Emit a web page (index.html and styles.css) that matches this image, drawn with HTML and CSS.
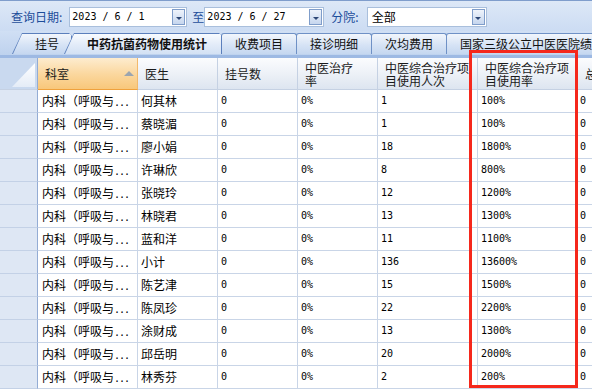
FILE: index.html
```html
<!DOCTYPE html>
<html lang="zh-CN">
<head>
    <meta charset="UTF-8">
    <title>中药抗菌药物使用统计</title>
    <link rel="stylesheet" href="styles.css">
</head>
<body>
<div class="app">

    <div class="toolbar">
        <span class="lbl">查询日期:</span>
        <div class="combo date1"><span class="val n">2023 / 6 / 1</span><span class="btn"></span></div>
        <span class="lbl to">至</span>
        <div class="combo date2"><span class="val n">2023 / 6 / 27</span><span class="btn"></span></div>
        <span class="lbl branch">分院:</span>
        <div class="combo sel"><span class="val">全部</span><span class="btn"></span></div>
    </div>

    <div class="tabbar">
        <div class="tab slant first"><div class="tab-in">挂号</div></div>
        <div class="tab slant active"><div class="tab-in">中药抗菌药物使用统计</div></div>
        <div class="tab">收费项目</div>
        <div class="tab">接诊明细</div>
        <div class="tab">次均费用</div>
        <div class="tab">国家三级公立中医医院绩效考核</div>
    </div>

    <div class="grid">
        <div class="row head">
            <div class="cell corner">
                <svg width="37" height="31" viewBox="0 0 37 31">
                    <defs>
                        <linearGradient id="cg" x1="0" y1="0" x2="0" y2="1">
                            <stop offset="0" stop-color="#ffffff"/>
                            <stop offset="1" stop-color="#e4ecf7"/>
                        </linearGradient>
                    </defs>
                    <polygon points="12,29 35,29 35,5" fill="url(#cg)"/>
                </svg>
            </div>
            <div class="cell sorted">科室<span class="sort-arrow"></span></div>
            <div class="cell">医生</div>
            <div class="cell">挂号数</div>
            <div class="cell">中医治疗<br>率</div>
            <div class="cell">中医综合治疗项<br>目使用人次</div>
            <div class="cell">中医综合治疗项<br>目使用率</div>
            <div class="cell">总人次</div>
        </div>
        <div id="rows"></div>
    </div>

    <div class="mark"></div>
</div>

<script>
    const rows = [
        ["何其林", 1], ["蔡晓湄", 1], ["廖小娟", 18], ["许琳欣", 8],
        ["张晓玲", 12], ["林晓君", 13], ["蓝和洋", 11], ["小计", 136],
        ["陈艺津", 15], ["陈凤珍", 22], ["涂财成", 13], ["邱岳明", 20],
        ["林秀芬", 2]
    ];

    document.getElementById("rows").innerHTML = rows.map(r => `
        <div class="row">
            <div class="cell rh"></div>
            <div class="cell">内科（呼吸与<span class="n dots">...</span></div>
            <div class="cell">${r[0]}</div>
            <div class="cell n">0</div>
            <div class="cell n">0%</div>
            <div class="cell n">${r[1]}</div>
            <div class="cell n">${r[1] * 100}%</div>
            <div class="cell n last">0</div>
        </div>
    `).join("");
</script>
</body>
</html>
```

FILE: styles.css
```css
body {
    margin: 0;
    font-family: "Noto Sans CJK SC", sans-serif;
    font-size: 12px;
    color: #000;
    background: #fff;
    overflow: hidden;
}
.app {
    position: relative;
    width: 592px;
    height: 389px;
    overflow: hidden;
}
.n {
    font-family: "DejaVu Sans Mono", monospace;
    font-size: 10px;
}

/* toolbar */
.toolbar {
    height: 31px;
    box-sizing: border-box;
    border-top: 1px solid #7f9dcc;
    padding: 1px 0 0 11px;
    display: flex;
    align-items: center;
    background: linear-gradient(#dde8f7, #ccdcf3);
}
.lbl {
    color: #1d4d9a;
    white-space: nowrap;
}
.lbl:first-child {
    margin-right: 7px;
}
.to {
    margin: 0 0 0 5px;
}
.branch {
    margin: 0 8px 0 7px;
}
.combo {
    height: 20px;
    box-sizing: border-box;
    border: 1px solid #a9bfdc;
    background: #fff;
    display: flex;
    align-items: center;
}
.date1 {
    width: 118px;
}
.date2 {
    width: 120px;
}
.sel {
    width: 120px;
}
.val {
    padding-left: 2px;
    white-space: pre;
}
.sel .val {
    padding-left: 4px;
}
.btn {
    width: 13px;
    height: 16px;
    box-sizing: border-box;
    margin: 0 1px 0 auto;
    border: 1px solid #7f9dca;
    background: linear-gradient(#eef3fb, #c6d6ee);
    display: flex;
    align-items: center;
    justify-content: center;
}
.btn::after {
    content: "";
    margin-top: 3px;
    border-top: 3px solid #2d4775;
    border-left: 3px solid transparent;
    border-right: 3px solid transparent;
}

/* tabs */
.tabbar {
    height: 24px;
    box-sizing: border-box;
    padding: 0 0 1px 12px;
    display: flex;
    align-items: flex-end;
    background: linear-gradient(#d0dff4, #bed2ee);
}
.tab {
    flex-shrink: 0;
    height: 21px;
    box-sizing: border-box;
    margin-left: -1px;
    padding: 0 13px;
    border: 1px solid #6f91c6;
    border-bottom: none;
    border-radius: 3px 3px 0 0;
    background: linear-gradient(#f2f6fc, #d6e3f5 55%, #c5d7f0);
    line-height: 19px;
    color: #111;
    white-space: nowrap;
}
.tab.slant {
    padding: 1px 1px 0 1px;
    border: none;
    border-radius: 0;
    background: #5b7fbc;
    clip-path: polygon(10px 0, calc(100% - 3px) 0, 100% 3px, 100% 100%, 0 100%);
}
.tab-in {
    height: 100%;
    background: linear-gradient(#f2f6fc, #d6e3f5 55%, #c5d7f0);
    clip-path: polygon(9px 0, 100% 0, 100% 100%, 0 100%);
}
.first {
    width: 60px;
    margin-left: 0;
}
.first .tab-in {
    padding-left: 22px;
}
.active {
    width: 158px;
    margin-left: -8px;
    position: relative;
    z-index: 1;
    font-weight: bold;
}
.active .tab-in {
    padding-left: 22px;
    background: linear-gradient(#f8fbff, #e2ebf8 55%, #d3e1f4);
}

/* grid */
.grid {
    border-top: 3px solid #9db9e3;
}
.row {
    display: grid;
    grid-template-columns: 38px 100px 80px 80px 80px 100px 100px 100px;
    height: 23px;
}
.cell {
    box-sizing: border-box;
    padding-left: 3px;
    border-right: 1px solid #c9d5e7;
    border-bottom: 1px solid #c9d5e7;
    line-height: 22px;
    white-space: nowrap;
    overflow: hidden;
}
.cell:nth-child(2) {
    padding-left: 4px;
}
.dots {
    letter-spacing: -1px;
}
.last {
    padding-left: 2px;
}
.rh {
    background: #dee7f4;
    border-right-color: #93acd4;
    border-bottom-color: #c3d1e6;
}
.head {
    height: 32px;
}
.head .cell {
    padding-left: 7px;
    display: flex;
    align-items: center;
    line-height: 13px;
    color: #1a1a1a;
    border-color: #c5d1e3;
    background: linear-gradient(#fbfcfe, #edf1f7 50%, #dde5f0);
}
.head .corner {
    padding: 0;
    align-items: stretch;
    background: #c9d9ef;
    border-right-color: #93acd4;
}
.head .sorted {
    background: linear-gradient(#fdeccf, #fbd8a0 50%, #f8c77a);
    border-right-color: #f2b96c;
    border-bottom-color: #efa13c;
}
.sort-arrow {
    margin: 0 3px 0 auto;
    border-bottom: 5px solid #9ba5af;
    border-left: 5px solid transparent;
    border-right: 5px solid transparent;
}

/* highlight box drawn over the grid */
.mark {
    position: absolute;
    left: 469px;
    top: 50px;
    width: 109px;
    height: 338px;
    box-sizing: border-box;
    border: 3px solid #f5281c;
}
```
